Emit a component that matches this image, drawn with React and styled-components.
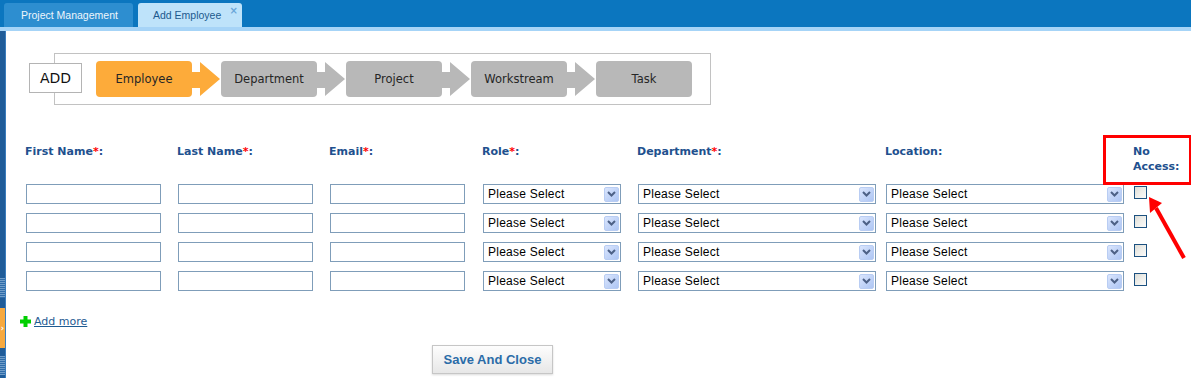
import React from "react";
import styled, { createGlobalStyle } from "styled-components";

const Global = createGlobalStyle`
  html, body { margin: 0; padding: 0; background: #fff; }
  * { box-sizing: border-box; }
`;

const Page = styled.div`
  position: relative;
  width: 1191px;
  height: 378px;
  overflow: hidden;
  background: #fff;
  display: flex;
  flex-direction: column;
  font-family: "DejaVu Sans", Verdana, sans-serif;
`;

const TopBar = styled.div`
  height: 27px;
  background: #0b76bf;
  display: flex;
  align-items: flex-end;
  padding-left: 4px;
  gap: 5px;
  flex: none;
`;

const Tab = styled.div`
  position: relative;
  height: 24px;
  width: ${(p) => p.$w}px;
  padding-left: ${(p) => p.$pl}px;
  display: flex;
  align-items: center;
  border-radius: 3px 3px 0 0;
  background: ${(p) => (p.$active ? "#bee3fa" : "#2d8ed0")};
  color: ${(p) => (p.$active ? "#1c5a8e" : "#eef6fc")};
  font-family: "Liberation Sans", Arial, sans-serif;
  font-size: 10.5px;
`;

const Close = styled.span`
  position: absolute;
  right: 4px;
  top: 2px;
  font-size: 10px;
  font-weight: bold;
  color: #6aa6d8;
  font-family: "DejaVu Sans", sans-serif;
`;

const Strip = styled.div`
  height: 4px;
  background: #a6d4f7;
  flex: none;
`;

const Body = styled.div`
  flex: 1;
  display: flex;
`;

const Rail = styled.div`
  width: 6px;
  display: flex;
  flex-direction: column;
  background: #1f5c99;
  border-right: 1px solid #3b7dbd;
  flex: none;
`;

const RailFill = styled.div`
  height: ${(p) => p.$h}px;
  flex: none;
`;

const Grip = styled.div`
  height: ${(p) => p.$h}px;
  flex: none;
  background: repeating-linear-gradient(
    to bottom,
    #6f9cc8 0px,
    #6f9cc8 1px,
    #2f6ca8 1px,
    #2f6ca8 2px
  );
`;

const Handle = styled.div`
  height: 40px;
  flex: none;
  background: #f7a93f;
  color: #fff;
  font-size: 8px;
  font-weight: bold;
  display: flex;
  align-items: center;
  justify-content: center;
`;

const Content = styled.div`
  flex: 1;
  padding-top: 22px;
  display: flex;
  flex-direction: column;
  align-items: flex-start;
`;

const FlowRow = styled.div`
  display: flex;
  align-items: flex-start;
  margin-left: 23px;
`;

const AddBox = styled.div`
  position: relative;
  z-index: 1;
  margin-top: 10px;
  width: 53px;
  height: 30px;
  border: 1px solid #b4b4b4;
  background: #fff;
  display: flex;
  align-items: center;
  justify-content: center;
  font-family: "DejaVu Sans", sans-serif;
  font-size: 14px;
  color: #111;
`;

const FlowBox = styled.div`
  margin-left: -28px;
  width: 657px;
  height: 52px;
  border: 1px solid #c2c2c2;
  padding: 7px 0 7px 41px;
  display: flex;
  align-items: center;
`;

const Step = styled.div`
  width: 96px;
  height: 36px;
  border-radius: 4px;
  background: ${(p) => (p.$active ? "#fdab3a" : "#b8b8b8")};
  display: flex;
  align-items: center;
  justify-content: center;
  font-family: "DejaVu Sans", Tahoma, sans-serif;
  font-size: 11.5px;
  color: #262626;
  flex: none;
`;

const Arrow = styled.div`
  width: 29px;
  height: 36px;
  flex: none;
  background: ${(p) => (p.$active ? "#fdab3a" : "#b8b8b8")};
  clip-path: polygon(
    0 11px,
    8px 11px,
    8px 1px,
    28px 18px,
    8px 35px,
    8px 27px,
    0 27px
  );
`;

const Form = styled.div`
  margin-top: 39px;
  margin-left: 19px;
  display: grid;
  grid-template-columns: 152px 152px 153px 155px 248px 248px 50px;
  row-gap: 9px;
`;

const Label = styled.div`
  position: relative;
  font-family: "DejaVu Sans", Verdana, sans-serif;
  font-weight: bold;
  font-size: 11px;
  line-height: 15px;
  color: #21508e;
  padding-bottom: 1px;
  align-self: start;
`;

const Star = styled.span`
  color: #ff0000;
`;

const Highlight = styled(Label)`
  &::after {
    content: "";
    position: absolute;
    left: -30px;
    top: -9px;
    width: 83px;
    height: 44px;
    border: 3px solid #ff0000;
  }
`;

const TextInput = styled.input`
  width: 135px;
  height: 20px;
  margin: 0 0 0 1px;
  border: 1px solid #7f9db9;
  background: #fff;
  padding: 0 3px;
  outline: none;
`;

const SelectBox = styled.div`
  width: ${(p) => p.$w}px;
  height: 20px;
  margin-left: 1px;
  border: 1px solid #7f9db9;
  background: #fff;
  display: flex;
  align-items: center;
  justify-content: space-between;
  padding: 0 1px 0 4px;
  font-family: "Liberation Sans", Arial, sans-serif;
  font-size: 12px;
  letter-spacing: 0.25px;
  color: #000;
`;

const SelectButton = styled.span`
  width: 15px;
  height: 15px;
  border: 1px solid #b9cdf3;
  border-radius: 2px;
  background: linear-gradient(135deg, #dbe6fd 0%, #c3d5f8 50%, #aec6f4 100%);
  display: flex;
  align-items: center;
  justify-content: center;
`;

const Check = styled.input.attrs({ type: "checkbox" })`
  appearance: none;
  -webkit-appearance: none;
  width: 13px;
  height: 13px;
  margin: 2px 0 0 1px;
  border: 1px solid #1c5180;
  background: linear-gradient(135deg, #dcdcd6 0%, #eeeeea 50%, #fbfbfa 100%);
`;

const AddMore = styled.div`
  margin-top: 23px;
  margin-left: 14px;
  display: flex;
  align-items: center;
  gap: 3px;
`;

const AddLink = styled.a`
  font-family: "DejaVu Sans", Verdana, sans-serif;
  font-size: 11px;
  line-height: 15px;
  color: #1e5b92;
  text-decoration: underline;
  cursor: pointer;
`;

const SaveButton = styled.button`
  margin-top: 16px;
  margin-left: 426px;
  width: 121px;
  height: 29px;
  border: 1px solid #c6c6c6;
  background: linear-gradient(#fdfdfd, #e7e7e7);
  box-shadow: 0 1px 2px rgba(0, 0, 0, 0.15);
  font-family: "Liberation Sans", Arial, sans-serif;
  font-weight: bold;
  font-size: 13px;
  color: #2b6ca8;
  padding: 0;
`;

const Annotation = styled.svg`
  position: absolute;
  left: 1140px;
  top: 190px;
  pointer-events: none;
`;

const Chevron = () => (
  <svg width="9" height="6" viewBox="0 0 9 6">
    <polyline
      points="1,1 4.5,4.5 8,1"
      fill="none"
      stroke="#4d6186"
      strokeWidth="2"
    />
  </svg>
);

const Select = ({ w }) => (
  <SelectBox $w={w}>
    <span>Please Select</span>
    <SelectButton>
      <Chevron />
    </SelectButton>
  </SelectBox>
);

const Plus = () => (
  <svg width="11" height="11" viewBox="0 0 11 11">
    <rect x="3.5" y="0" width="4" height="11" fill="#00cf00" />
    <rect x="0" y="3.5" width="11" height="4" fill="#00cf00" />
  </svg>
);

const steps = ["Employee", "Department", "Project", "Workstream", "Task"];

export default function App() {
  return (
    <Page>
      <Global />
      <TopBar>
        <Tab $w={129} $pl={17}>Project Management</Tab>
        <Tab $w={104} $pl={15} $active>
          Add Employee
          <Close>×</Close>
        </Tab>
      </TopBar>
      <Strip />
      <Body>
        <Rail>
          <RailFill $h={247} />
          <Grip $h={20} />
          <RailFill $h={10} />
          <Handle>›</Handle>
          <RailFill $h={8} />
          <Grip $h={19} />
        </Rail>
        <Content>
          <FlowRow>
            <AddBox>ADD</AddBox>
            <FlowBox>
              {steps.map((s, i) => (
                <React.Fragment key={s}>
                  <Step $active={i === 0}>{s}</Step>
                  {i < steps.length - 1 && <Arrow $active={i === 0} />}
                </React.Fragment>
              ))}
            </FlowBox>
          </FlowRow>
          <Form>
            <Label>
              First Name<Star>*</Star>:
            </Label>
            <Label>
              Last Name<Star>*</Star>:
            </Label>
            <Label>
              Email<Star>*</Star>:
            </Label>
            <Label>
              Role<Star>*</Star>:
            </Label>
            <Label>
              Department<Star>*</Star>:
            </Label>
            <Label>Location:</Label>
            <Highlight>
              No
              <br />
              Access:
            </Highlight>
            {[0, 1, 2, 3].map((r) => (
              <React.Fragment key={r}>
                <TextInput />
                <TextInput />
                <TextInput />
                <Select w={138} />
                <Select w={238} />
                <Select w={238} />
                <Check />
              </React.Fragment>
            ))}
          </Form>
          <AddMore>
            <Plus />
            <AddLink>Add more</AddLink>
          </AddMore>
          <SaveButton>Save And Close</SaveButton>
        </Content>
      </Body>
      <Annotation width="51" height="75" viewBox="0 0 51 75">
        <line x1="44" y1="68" x2="16" y2="18" stroke="#ff0000" strokeWidth="4" />
        <polygon points="9,7 22,13 10,23" fill="#ff0000" />
      </Annotation>
    </Page>
  );
}
